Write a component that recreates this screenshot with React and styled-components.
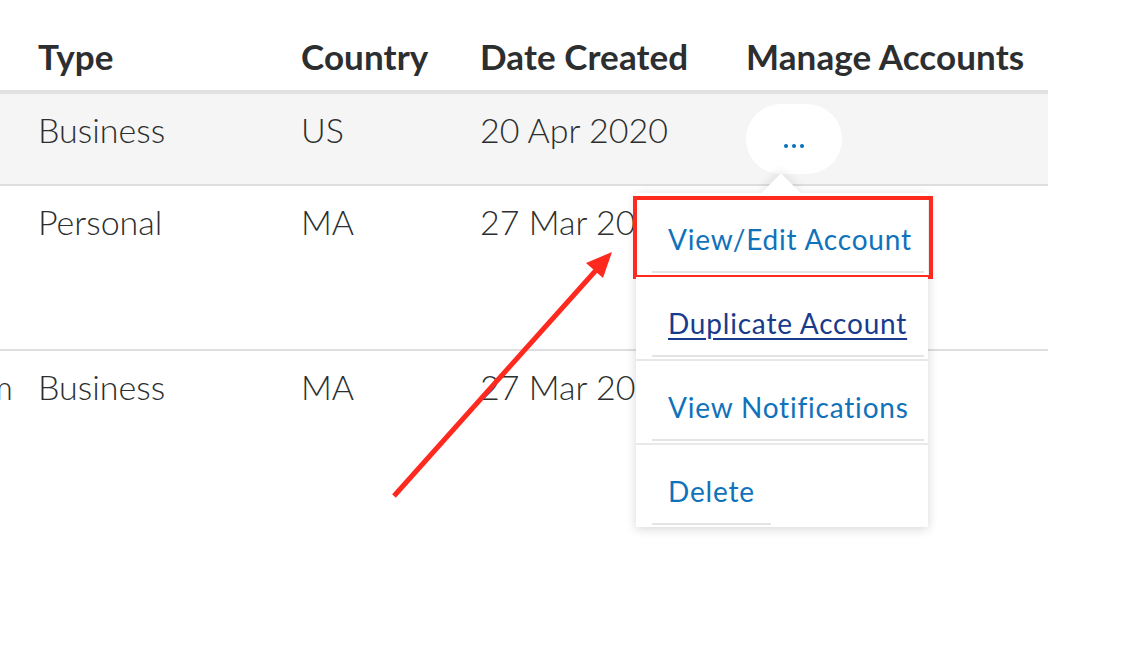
import React from 'react';
import styled, { createGlobalStyle } from 'styled-components';

const GlobalStyle = createGlobalStyle`
  html, body {
    margin: 0;
    padding: 0;
    background: #ffffff;
  }
  body {
    font-family: Lato, "Open Sans", "Liberation Sans", sans-serif;
    color: #2c2e2f;
  }
`;

// Page + table
const Page = styled.div`
  position: relative;
  width: 1124px;
  height: 662px;
  overflow: hidden;
`;

const Table = styled.div`
  width: 1048px;
`;

const Row = styled.div`
  display: grid;
  grid-template-columns: 22px 263px 179px 266px 318px;
  height: ${(p) => p.$height}px;
  background: ${(p) => (p.$shaded ? '#f5f5f5' : '#ffffff')};
  border-bottom: ${(p) => p.$border || '2px solid #dedede'};
  box-sizing: content-box;
`;

const HeadCell = styled.div`
  padding: 35px 0 0 16px;
  font-size: 35px;
  font-weight: 700;
  line-height: 42px;
  letter-spacing: 0.1px;
  white-space: nowrap;
`;

const Cell = styled.div`
  position: relative;
  padding: 15px 0 0 16px;
  font-size: 34px;
  font-weight: 300;
  line-height: 42px;
  white-space: nowrap;
`;

const ClipCell = styled.div`
  overflow: hidden;
  display: flex;
  justify-content: flex-end;
  padding: 15px 9px 0 0;
  font-size: 34px;
  font-weight: 300;
  line-height: 42px;
  white-space: nowrap;
`;

// Manage button
const MoreButton = styled.button`
  display: flex;
  align-items: center;
  justify-content: center;
  gap: 4px;
  width: 96px;
  height: 70px;
  margin: -5px 0 0 0;
  padding: 14px 0 0 0;
  border: none;
  border-radius: 35px;
  background: #ffffff;
  cursor: pointer;
`;

const Dot = styled.span`
  width: 4px;
  height: 4px;
  border-radius: 50%;
  background: #0070ba;
`;

// Dropdown
const Menu = styled.div`
  position: absolute;
  left: -110px;
  top: 89px;
  width: 292px;
  padding: 0 4px 0 16px;
  box-sizing: border-box;
  background: #ffffff;
  box-shadow: 0 2px 10px rgba(0, 0, 0, 0.16);
  z-index: 2;
`;

const Caret = styled.span`
  position: absolute;
  left: 131px;
  top: -14px;
  width: 28px;
  height: 28px;
  background: #ffffff;
  transform: rotate(45deg);
  box-shadow: -3px -3px 8px rgba(0, 0, 0, 0.08);
`;

const Item = styled.div`
  position: relative;
  margin-left: -16px;
  margin-right: -4px;
  padding: 0 4px 0 16px;
  height: 82px;
  border-bottom: ${(p) => (p.$last ? 'none' : '2px solid #e8e8e8')};
  background: #ffffff;
`;

const ItemLink = styled.a`
  display: ${(p) => (p.$inline ? 'inline-block' : 'block')};
  box-sizing: border-box;
  height: 80px;
  padding: 29px 16px 0 16px;
  border-bottom: 2px solid #e4e4e4;
  font-size: 28px;
  font-weight: 400;
  line-height: 34px;
  letter-spacing: 0.8px;
  white-space: nowrap;
  color: ${(p) => (p.$visited ? '#183b8c' : '#1072ba')};
  text-decoration: ${(p) => (p.$visited ? 'underline' : 'none')};
  text-decoration-thickness: 2px;
  text-underline-offset: 4px;
`;

const Highlight = styled.span`
  position: absolute;
  left: -3px;
  right: -5px;
  top: 3px;
  bottom: -4px;
  border: 4.5px solid #ff2a1f;
  pointer-events: none;
`;

const Annotation = styled.svg`
  position: absolute;
  left: 0;
  top: 0;
  pointer-events: none;
  z-index: 3;
`;

const menuItems = [
  { label: 'View/Edit Account', highlight: true },
  { label: 'Duplicate Account', visited: true },
  { label: 'View Notifications' },
  { label: 'Delete', inline: true, last: true },
];

function ManageMenu() {
  return (
    <Menu>
      <Caret />
      {menuItems.map((item) => (
        <Item key={item.label} $last={item.last}>
          <ItemLink href="#" $inline={item.inline} $visited={item.visited}>
            {item.label}
          </ItemLink>
          {item.highlight && <Highlight />}
        </Item>
      ))}
    </Menu>
  );
}

export default function App() {
  return (
    <Page>
      <GlobalStyle />
      <Table>
        <Row $height={90} $border="4px solid #e1e1e1">
          <HeadCell />
          <HeadCell>Type</HeadCell>
          <HeadCell>Country</HeadCell>
          <HeadCell>Date Created</HeadCell>
          <HeadCell>Manage Accounts</HeadCell>
        </Row>
        <Row $height={90} $shaded>
          <ClipCell />
          <Cell>Business</Cell>
          <Cell>US</Cell>
          <Cell>20 Apr 2020</Cell>
          <Cell>
            <MoreButton aria-label="More actions">
              <Dot />
              <Dot />
              <Dot />
            </MoreButton>
            <div style={{ position: 'absolute', left: 16, top: 10 }}>
              <ManageMenu />
            </div>
          </Cell>
        </Row>
        <Row $height={163}>
          <ClipCell />
          <Cell>Personal</Cell>
          <Cell>MA</Cell>
          <Cell>27 Mar 2020</Cell>
          <Cell />
        </Row>
        <Row $height={200} $border="none">
          <ClipCell>jdoe@mail.com</ClipCell>
          <Cell>Business</Cell>
          <Cell>MA</Cell>
          <Cell>27 Mar 2020</Cell>
          <Cell />
        </Row>
      </Table>
      <Annotation width="1124" height="662" viewBox="0 0 1124 662">
        <line x1="394" y1="496" x2="598" y2="268" stroke="#ff2a1f" strokeWidth="5" />
        <polygon points="612,252 586,263 603,278" fill="#ff2a1f" />
      </Annotation>
    </Page>
  );
}
